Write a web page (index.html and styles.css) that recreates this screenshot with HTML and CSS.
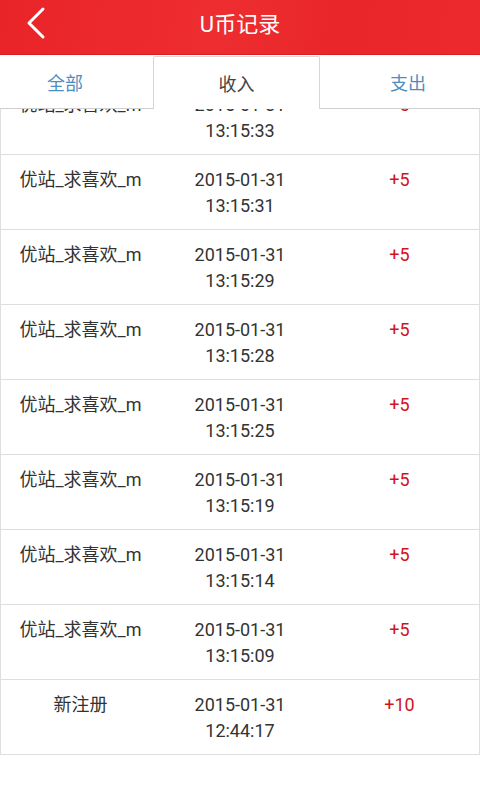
FILE: index.html
```html
<!DOCTYPE html>
<html lang="zh-CN">
<head>
    <meta charset="UTF-8">
    <meta name="viewport" content="width=device-width, initial-scale=1.0">
    <title>U币记录</title>
    <link rel="stylesheet" href="styles.css">
</head>
<body>
    <div class="topbar">
        <a class="back" href="#">
            <svg width="24" height="36" viewBox="0 0 24 36">
                <polyline points="18,4 4,18 18,32" fill="none" stroke="#fff" stroke-width="3" stroke-linecap="round" stroke-linejoin="round"/>
            </svg>
        </a>
        <h1>U币记录</h1>
    </div>

    <div class="tabs">
        <div class="tab tab-all">全部</div>
        <div class="tab tab-in active">收入</div>
        <div class="tab tab-out">支出</div>
    </div>

    <div class="list-view">
        <ul class="records">
            <li><span class="name">优站_求喜欢_m</span><span class="time">2015-01-31<br>13:15:33</span><span class="amount">+5</span></li>
            <li><span class="name">优站_求喜欢_m</span><span class="time">2015-01-31<br>13:15:31</span><span class="amount">+5</span></li>
            <li><span class="name">优站_求喜欢_m</span><span class="time">2015-01-31<br>13:15:29</span><span class="amount">+5</span></li>
            <li><span class="name">优站_求喜欢_m</span><span class="time">2015-01-31<br>13:15:28</span><span class="amount">+5</span></li>
            <li><span class="name">优站_求喜欢_m</span><span class="time">2015-01-31<br>13:15:25</span><span class="amount">+5</span></li>
            <li><span class="name">优站_求喜欢_m</span><span class="time">2015-01-31<br>13:15:19</span><span class="amount">+5</span></li>
            <li><span class="name">优站_求喜欢_m</span><span class="time">2015-01-31<br>13:15:14</span><span class="amount">+5</span></li>
            <li><span class="name">优站_求喜欢_m</span><span class="time">2015-01-31<br>13:15:09</span><span class="amount">+5</span></li>
            <li><span class="name">新注册</span><span class="time">2015-01-31<br>12:44:17</span><span class="amount">+10</span></li>
        </ul>
    </div>
</body>
</html>
```

FILE: styles.css
```css
/* page */
body {
    margin: 0;
    background: #fff;
    font-family: Roboto, "Noto Sans CJK SC", sans-serif;
    color: #333;
}

/* red title bar */
.topbar {
    height: 54px;
    background: linear-gradient(100deg, #e92429 0%, #ee2d31 45%, #e9272b 70%, #ec2a2e 100%);
    border-bottom: 1px solid #d81e22;
    display: flex;
    align-items: center;
    justify-content: center;
    position: relative;
}
.topbar h1 {
    margin: 0;
    font-size: 22px;
    font-weight: normal;
    color: #fff;
    padding-bottom: 10px;
}
.back {
    position: absolute;
    left: 25px;
    top: 5px;
    display: block;
}

/* tabs */
.tabs {
    display: flex;
    height: 54px;
}
.tab {
    display: flex;
    align-items: center;
    justify-content: center;
    font-size: 18px;
    color: #4b8fc1;
    border-bottom: 1px solid #cfcfcf;
    box-sizing: border-box;
}
.tab-all {
    width: 153px;
    padding-right: 23px;
}
.tab-in {
    width: 167px;
}
.tab-out {
    flex: 1;
    padding-left: 16px;
}
.tab.active {
    color: #444;
    border: 1px solid #d6d6d6;
    border-bottom: none;
    margin-top: 1px;
    border-radius: 2px 2px 0 0;
}

/* records list */
.list-view {
    overflow: hidden;
}
.records {
    list-style: none;
    margin: -29px 0 0 0;
    padding: 0;
    border-left: 1px solid #dedede;
    border-right: 1px solid #dedede;
}
.records li {
    display: flex;
    height: 75px;
    box-sizing: border-box;
    border-bottom: 1px solid #dedede;
    padding-top: 12px;
    font-size: 18px;
    line-height: 26px;
}
.records span {
    width: 160px;
    text-align: center;
}
.records .name {
    width: 159px;
}
.records .amount {
    width: 159px;
    color: #d0141c;
}
```
